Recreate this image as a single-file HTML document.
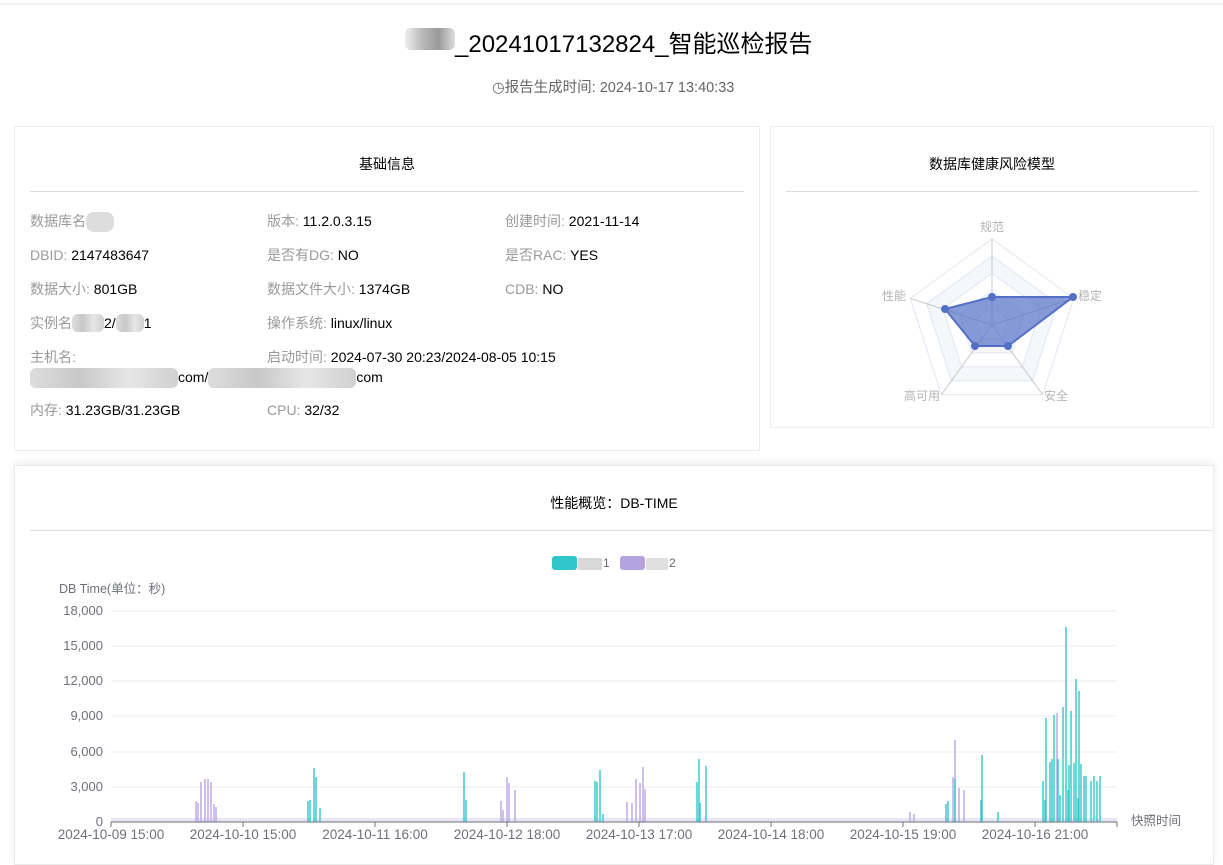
<!DOCTYPE html>
<html><head><meta charset="utf-8">
<style>
*{margin:0;padding:0;box-sizing:border-box}
body{width:1223px;height:860px;overflow:hidden;background:#fff;font-family:"Liberation Sans","Noto Sans CJK SC",sans-serif;position:relative;color:#000}
.a{position:absolute;white-space:nowrap}
.card{position:absolute;border:1px solid #ebebeb;background:#fff}
.ct{position:absolute;left:0;right:0;text-align:center;font-size:14px}
.hl{position:absolute;height:1px;background:#dcdcdc}
.info{position:absolute;font-size:14px;line-height:18px;height:18px;color:#000;white-space:nowrap}
.info span{color:#999}
.blur{display:inline-block;background:linear-gradient(90deg,#ddd,#c8c8c8,#e6e6e6,#d0d0d0);border-radius:6px;vertical-align:top}
</style></head><body>
<div class="a" style="left:0;top:3px;width:1223px;height:2px;background:#f0f2f5"></div>
<div class="a" style="left:405px;top:24px;font-size:24px;color:#000"><span class="blur" style="width:50px;height:22px;margin-top:4px;background:linear-gradient(90deg,#eee,#bbb,#999,#ddd)"></span>_20241017132824_智能巡检报告</div>
<div class="a" style="left:492px;top:76px;font-size:14.5px;color:#666">◷报告生成时间: 2024-10-17 13:40:33</div>

<div class="card" style="left:14px;top:126px;width:746px;height:325px">
  <div class="ct" style="top:27px">基础信息</div>
  <div class="hl" style="left:15px;top:64px;width:714px"></div>
</div>
<div class="info" style="left:30px;top:212px"><span>数据库名</span><span class="blur" style="width:28px;height:20px;background:#ddd;border-radius:8px"></span></div>
<div class="info" style="left:267px;top:212px"><span>版本: </span>11.2.0.3.15</div>
<div class="info" style="left:505px;top:212px"><span>创建时间: </span>2021-11-14</div>
<div class="info" style="left:30px;top:246px"><span>DBID: </span>2147483647</div>
<div class="info" style="left:267px;top:246px"><span>是否有DG: </span>NO</div>
<div class="info" style="left:505px;top:246px"><span>是否RAC: </span>YES</div>
<div class="info" style="left:30px;top:280px"><span>数据大小: </span>801GB</div>
<div class="info" style="left:267px;top:280px"><span>数据文件大小: </span>1374GB</div>
<div class="info" style="left:505px;top:280px"><span>CDB: </span>NO</div>
<div class="info" style="left:30px;top:314px"><span>实例名</span><span class="blur" style="width:32px;height:18px"></span>2/<span class="blur" style="width:28px;height:18px"></span>1</div>
<div class="info" style="left:267px;top:314px"><span>操作系统: </span>linux/linux</div>
<div class="info" style="left:30px;top:348px"><span>主机名:</span></div>
<div class="info" style="left:30px;top:368px"><span class="blur" style="width:148px;height:20px"></span>com/<span class="blur" style="width:148px;height:20px"></span>com</div>
<div class="info" style="left:267px;top:348px"><span>启动时间: </span>2024-07-30 20:23/2024-08-05 10:15</div>
<div class="info" style="left:30px;top:401px"><span>内存: </span>31.23GB/31.23GB</div>
<div class="info" style="left:267px;top:401px"><span>CPU: </span>32/32</div>

<div class="card" style="left:770px;top:126px;width:444px;height:302px">
  <div class="ct" style="top:27px">数据库健康风险模型</div>
  <div class="hl" style="left:15px;top:64px;width:413px"></div>
</div>
<svg class="a" style="left:0;top:0" width="1223" height="460">
 <g transform="translate(992,325)">
  <g fill="none" stroke="#e0e6f1">
   <polygon points="0,-86 81.8,-26.6 50.6,69.6 -50.6,69.6 -81.8,-26.6" fill="#fff"/>
   <polygon points="0,-68.8 65.4,-21.3 40.5,55.7 -40.5,55.7 -65.4,-21.3" fill="#f5f7fb"/>
   <polygon points="0,-51.6 49.1,-16 30.4,41.8 -30.4,41.8 -49.1,-16" fill="#fff"/>
   <polygon points="0,-34.4 32.7,-10.6 20.2,27.8 -20.2,27.8 -32.7,-10.6" fill="#f5f7fb"/>
   <polygon points="0,-17.2 16.4,-5.3 10.1,13.9 -10.1,13.9 -16.4,-5.3" fill="#fff"/>
  </g>
  <g stroke="#c8c8c8"><line x1="0" y1="0" x2="0" y2="-86"/><line x1="0" y1="0" x2="81.8" y2="-26.6"/><line x1="0" y1="0" x2="50.6" y2="69.6"/><line x1="0" y1="0" x2="-50.6" y2="69.6"/><line x1="0" y1="0" x2="-81.8" y2="-26.6"/></g>
  <polygon points="0,-28 81,-28 16,21 -17,21 -47,-16" fill="rgba(84,112,198,0.7)" stroke="#5470c6" stroke-width="2"/>
  <g fill="#5470c6"><circle cx="0" cy="-28" r="4"/><circle cx="81" cy="-28" r="4"/><circle cx="16" cy="21" r="4"/><circle cx="-17" cy="21" r="4"/><circle cx="-47" cy="-16" r="4"/></g>
  <g fill="#b4b4b4" font-size="12" font-family="Liberation Sans,Noto Sans CJK SC,sans-serif">
   <text x="0" y="-94" text-anchor="middle">规范</text>
   <text x="86" y="-25">稳定</text>
   <text x="52" y="75">安全</text>
   <text x="-52" y="75" text-anchor="end">高可用</text>
   <text x="-86" y="-25" text-anchor="end">性能</text>
  </g>
 </g>
</svg>

<div class="card" style="left:14px;top:465px;width:1200px;height:400px;box-shadow:0 -2px 8px rgba(0,0,0,0.08)">
  <div class="ct" style="top:27px">性能概览：DB-TIME</div>
  <div class="hl" style="left:15px;top:64px;width:1182px"></div>
</div>
<svg class="a" style="left:0;top:0" width="1223" height="860" font-family="Liberation Sans,Noto Sans CJK SC,sans-serif">
 <rect x="552" y="556" width="25" height="14" rx="3" fill="#30c6c9"/>
 <rect x="578" y="558" width="24" height="12" fill="#d8d8d8"/>
 <text x="603" y="567" font-size="12" fill="#666">1</text>
 <rect x="620" y="556" width="25" height="14" rx="3" fill="#b5a3df"/>
 <rect x="646" y="558" width="22" height="12" fill="#e0e0e0"/>
 <text x="669" y="567" font-size="12" fill="#666">2</text>
 <text x="59" y="593" font-size="12.5" fill="#6e7079">DB Time(单位：秒)</text>
 <g stroke="#e8ebf3"><line x1="111" y1="611" x2="1117" y2="611"/><line x1="111" y1="646" x2="1117" y2="646"/><line x1="111" y1="681" x2="1117" y2="681"/><line x1="111" y1="716" x2="1117" y2="716"/><line x1="111" y1="752" x2="1117" y2="752"/><line x1="111" y1="787" x2="1117" y2="787"/></g>
 <g font-size="13" fill="#6e7079" text-anchor="end"><text x="103" y="615">18,000</text><text x="103" y="650">15,000</text><text x="103" y="685">12,000</text><text x="103" y="720">9,000</text><text x="103" y="756">6,000</text><text x="103" y="791">3,000</text><text x="103" y="826">0</text></g>
 <rect x="111" y="818" width="1006" height="4" fill="#d9d3ef" opacity="0.6"/>
 <path stroke="#b8a6e3" stroke-width="1.4" fill="none" d="M196 822V801M198 822V803M201 822V782M205 822V779M208 822V779M211 822V782M214 822V804M216 822V807M501 822V801M503 822V810M507 822V777M509 822V783M515 822V790M627 822V802M632 822V803M636 822V779M640 822V783M643 822V767M645 822V789M955 822V740M953 822V777M959 822V788M964 822V790M1057 822V713M910 822V812M914 822V814"/>
 <path stroke="#30c6c9" stroke-width="1.4" fill="none" d="M308 822V801M310 822V800M314 822V768M316 822V777M320 822V808M464 822V772M466 822V800M595 822V781M597 822V782M600 822V770M603 822V814M697 822V782M699 822V759M700 822V803M706 822V766M946 822V804M948 822V801M955 822V779M981 822V800M982 822V755M998 822V812M1043 822V781M1046 822V718M1050 822V762M1052 822V759M1054 822V715M1058 822V759M1063 822V707M1066 822V627M1069 822V765M1071 822V711M1074 822V763M1076 822V679M1079 822V691M1081 822V764M1084 822V776M1086 822V776M1091 822V781M1094 822V776M1097 822V781M1100 822V776M1045 822V800M1060 822V795M1068 822V790M1078 822V798"/>
 <line x1="111" y1="822" x2="1117" y2="822" stroke="#6e7079"/>
 <g stroke="#6e7079"><line x1="111" y1="822" x2="111" y2="827"/><line x1="243" y1="822" x2="243" y2="827"/><line x1="375" y1="822" x2="375" y2="827"/><line x1="507" y1="822" x2="507" y2="827"/><line x1="639" y1="822" x2="639" y2="827"/><line x1="771" y1="822" x2="771" y2="827"/><line x1="903" y1="822" x2="903" y2="827"/><line x1="1035" y1="822" x2="1035" y2="827"/><line x1="1117" y1="822" x2="1117" y2="827"/></g>
 <g font-size="13.5" fill="#6e7079" text-anchor="middle"><text x="111" y="839">2024-10-09 15:00</text><text x="243" y="839">2024-10-10 15:00</text><text x="375" y="839">2024-10-11 16:00</text><text x="507" y="839">2024-10-12 18:00</text><text x="639" y="839">2024-10-13 17:00</text><text x="771" y="839">2024-10-14 18:00</text><text x="903" y="839">2024-10-15 19:00</text><text x="1035" y="839">2024-10-16 21:00</text></g>
 <text x="1131" y="825" font-size="12.5" fill="#6e7079">快照时间</text>
</svg>
</body></html>
